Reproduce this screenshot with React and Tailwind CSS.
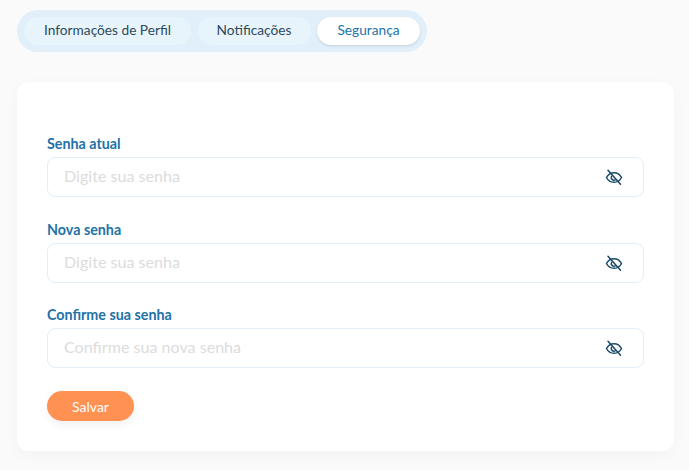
import React from 'react';

const EyeOff = () => (
  <svg className="w-[18px] h-[18px] text-[#1a4a68]" viewBox="0 0 18 18" fill="none" stroke="currentColor" strokeWidth="1.5" strokeLinecap="round">
    <path d="M1.500 9.500C3.200 6.300 5.800 4.700 9 4.700s5.800 1.600 7.500 4.800C14.800 12.700 12.200 14.300 9 14.300s-5.800-1.600-7.500-4.800z" />
    <path d="M6.600 8.200a2.700 2.700 0 0 0 3.600 3.700" />
    <path d="M3 2.300l12.500 14" />
  </svg>
);

const Field = ({ label, placeholder, className }) => (
  <div className={className}>
    <label className="block text-[14.300px] leading-[20px] pt-[1px] font-bold text-[#2272a8] mb-[3px]">{label}</label>
    <div className="flex items-center h-[40px] border border-[#e0eff8] rounded-lg pl-4 pr-[20px]">
      <input
        type="password"
        placeholder={placeholder}
        className="flex-1 min-w-0 mb-[2px] text-[16.100px] outline-none bg-transparent placeholder:text-[#dcdcdc]"
      />
      <EyeOff />
    </div>
  </div>
);

const App = () => {
  return (
    <div className="min-h-[470px] bg-[#fafafa] pl-[17px] pr-[15px] pt-[10px] pb-[19px] font-['Lato','Noto_Sans',sans-serif]">
      <div className="inline-flex gap-[6.500px] p-[7px] rounded-full bg-[#e0eff9]">
        <button className="w-[167px] h-[28px] pb-[2px] rounded-full bg-[#e8f4fb] text-[13.700px] text-[#2c4a5c]">Informações de Perfil</button>
        <button className="w-[113px] h-[28px] pb-[2px] rounded-full bg-[#e8f4fb] text-[13.700px] text-[#2c4a5c]">Notificações</button>
        <button className="w-[103px] h-[28px] pb-[2px] rounded-full bg-white text-[13.700px] text-[#2272a8] shadow-sm">Segurança</button>
      </div>

      <div className="mt-[30px] h-[369px] bg-white rounded-xl shadow-[0_4px_16px_rgba(0,0,0,0.03)] px-[30px] pt-[51px]">
        <Field label="Senha atual" placeholder="Digite sua senha" />
        <Field className="mt-[22px]" label="Nova senha" placeholder="Digite sua senha" />
        <Field className="mt-[21px]" label="Confirme sua senha" placeholder="Confirme sua nova senha" />
        <button className="mt-[23px] w-[87px] h-[30px] rounded-full bg-[#ff9152] text-white text-[14px] shadow-[0_4px_10px_rgba(0,0,0,0.06)]">Salvar</button>
      </div>
    </div>
  );
};

export default App;
